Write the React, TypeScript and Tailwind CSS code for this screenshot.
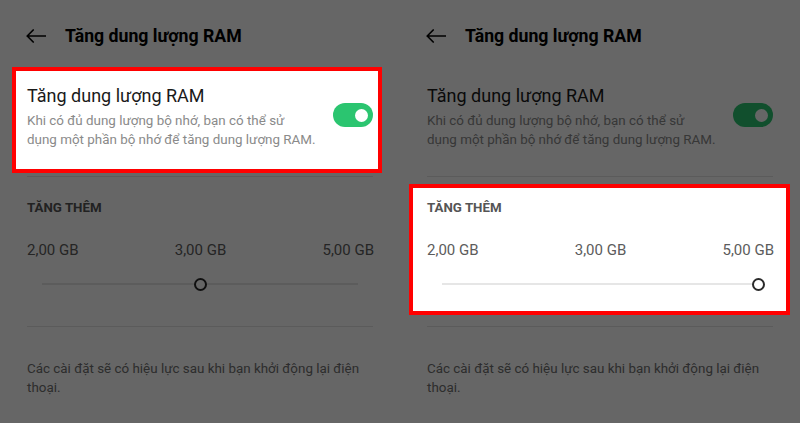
import React from "react";

function Arrow() {
  return (
    <svg width="20" height="14" viewBox="0 0 20 14" fill="none">
      <path d="M19.5 7H1.2M7.2 1L1.2 7L7.2 13" stroke="#000" strokeWidth="1.7" strokeLinecap="round" strokeLinejoin="round" />
    </svg>
  );
}

function Panel({ hl, value }: { hl: 1 | 2; value: number }) {
  const pct = value;
  const box1 = hl === 1 ? "relative z-20 bg-white border-[#ff0000]" : "border-transparent";
  const box2 = hl === 2 ? "relative z-20 bg-white border-[#ff0000]" : "border-transparent";
  return (
    <div className="relative w-[400px] h-[423px] bg-white overflow-hidden flex flex-col shrink-0">
      <div className="absolute inset-0 bg-black/60 z-10" />
      <div className="flex items-center h-[26px] mt-[23px] pl-[26px]">
        <Arrow />
        <span className="ml-[19px] text-[17.7px] leading-[26px] font-bold text-black">Tăng dung lượng RAM</span>
      </div>
      <div className={`mt-[18px] ml-[12px] w-[370px] h-[106px] border-[4px] flex pl-[11px] pr-[5px] ${box1}`}>
        <div className="flex flex-col pt-[13px]">
          <div className="text-[18px] leading-[24px] text-[#1a1a1a]">Tăng dung lượng RAM</div>
          <div className="mt-[3px] text-[13.4px] leading-[19px] text-[#8a8a8a]">
            Khi có đủ dung lượng bộ nhớ, bạn có thể sử
            <br />
            dụng một phần bộ nhớ để tăng dung lượng RAM.
          </div>
        </div>
        <div className="ml-auto mt-[32px] w-[40px] h-[24px] rounded-full bg-[#2bc570] flex items-center justify-end pr-[5px] shrink-0">
          <div className="w-[13px] h-[13px] rounded-full bg-white" />
        </div>
      </div>
      <div className="mt-[3px] ml-[27px] w-[346px] h-px bg-[#e4e4e4]" />
      <div className={`mt-[7px] ml-[9px] w-[381px] h-[131px] border-[4px] flex flex-col pl-[14px] pr-[12px] ${box2}`}>
        <div className="pt-[12px] text-[13.3px] leading-[16px] font-bold text-[#555]">TĂNG THÊM</div>
        <div className="mt-[24px] flex justify-between text-[15px] leading-[20px] text-[#5c5c5c]">
          <span>2,00 GB</span>
          <span>3,00 GB</span>
          <span>5,00 GB</span>
        </div>
        <div className="relative mt-[17px] ml-[15px] w-[316px] h-[14px] flex items-center">
          <div className="w-full h-[2px] bg-[#e6e6e6]" />
          <div
            className="absolute top-[0.5px] w-[13px] h-[13px] rounded-full border-[2px] border-[#2a2a2a] bg-white"
            style={{ left: `${pct * 316 - 6.5}px` }}
          />
        </div>
      </div>
      <div className="mt-[11px] ml-[27px] w-[346px] h-px bg-[#e4e4e4]" />
      <div className="mt-[32px] ml-[27px] text-[13.4px] leading-[19px] text-[#707070]">
        Các cài đặt sẽ có hiệu lực sau khi bạn khởi động lại điện
        <br />
        thoại.
      </div>
    </div>
  );
}

export default function App() {
  return (
    <div className="w-[800px] h-[423px] flex font-['Roboto',sans-serif] overflow-hidden">
      <Panel hl={1} value={0.5} />
      <Panel hl={2} value={1} />
    </div>
  );
}
